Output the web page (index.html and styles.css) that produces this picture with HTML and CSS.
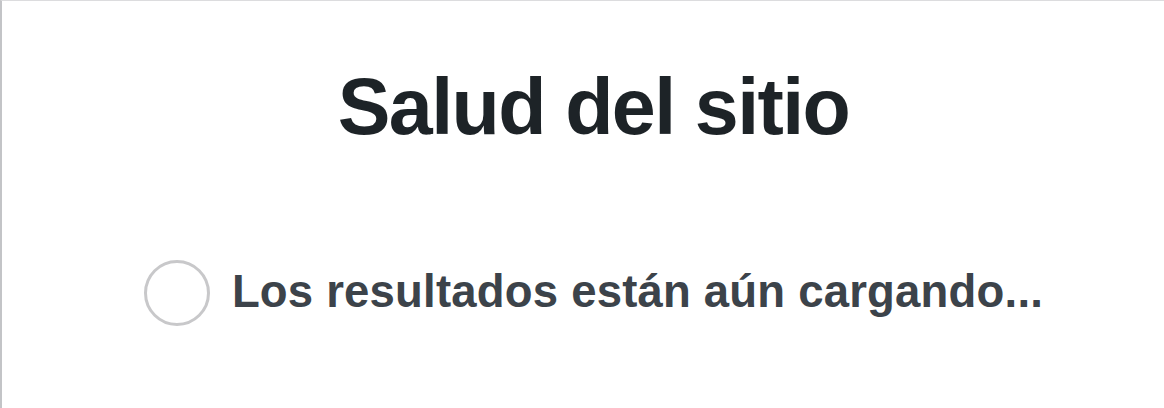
FILE: index.html
```html
<!DOCTYPE html>
<html lang="es">
<head>
<meta charset="utf-8">
<title>Salud del sitio</title>
<link rel="stylesheet" href="styles.css">
</head>
<body>
<div class="health-header">
  <h1 class="health-title">Salud del sitio</h1>
  <div class="health-progress">
    <span class="progress-ring" aria-hidden="true"></span>
    <span class="progress-label">Los resultados están aún cargando...</span>
  </div>
</div>
</body>
</html>
```
FILE: styles.css
```css
html, body {
  margin: 0;
  padding: 0;
  background: #ffffff;
}

body {
  width: 1164px;
  height: 408px;
  overflow: hidden;
  font-family: "Liberation Sans", Arial, sans-serif;
}

.health-header {
  box-sizing: border-box;
  height: 408px;
  border-top: 1px solid #dcdcde;
  border-left: 2px solid #c3c4c7;
  padding: 66px 0 0 21px;
  display: flex;
  flex-direction: column;
  align-items: center;
}

.health-title {
  margin: 0;
  font-size: 79px;
  line-height: 1;
  font-weight: 700;
  color: #1d2327;
  letter-spacing: -1.6px;
}

.health-progress {
  margin-top: 114px;
  display: flex;
  align-items: center;
  gap: 22px;
}

.progress-ring {
  box-sizing: border-box;
  width: 66px;
  height: 66px;
  border-radius: 50%;
  border: 3.5px solid #c8c8ca;
  flex: none;
}

.progress-label {
  font-size: 45.5px;
  line-height: 1;
  font-weight: 700;
  color: #3c434a;
  letter-spacing: 0.2px;
  padding-bottom: 3px;
}
```
